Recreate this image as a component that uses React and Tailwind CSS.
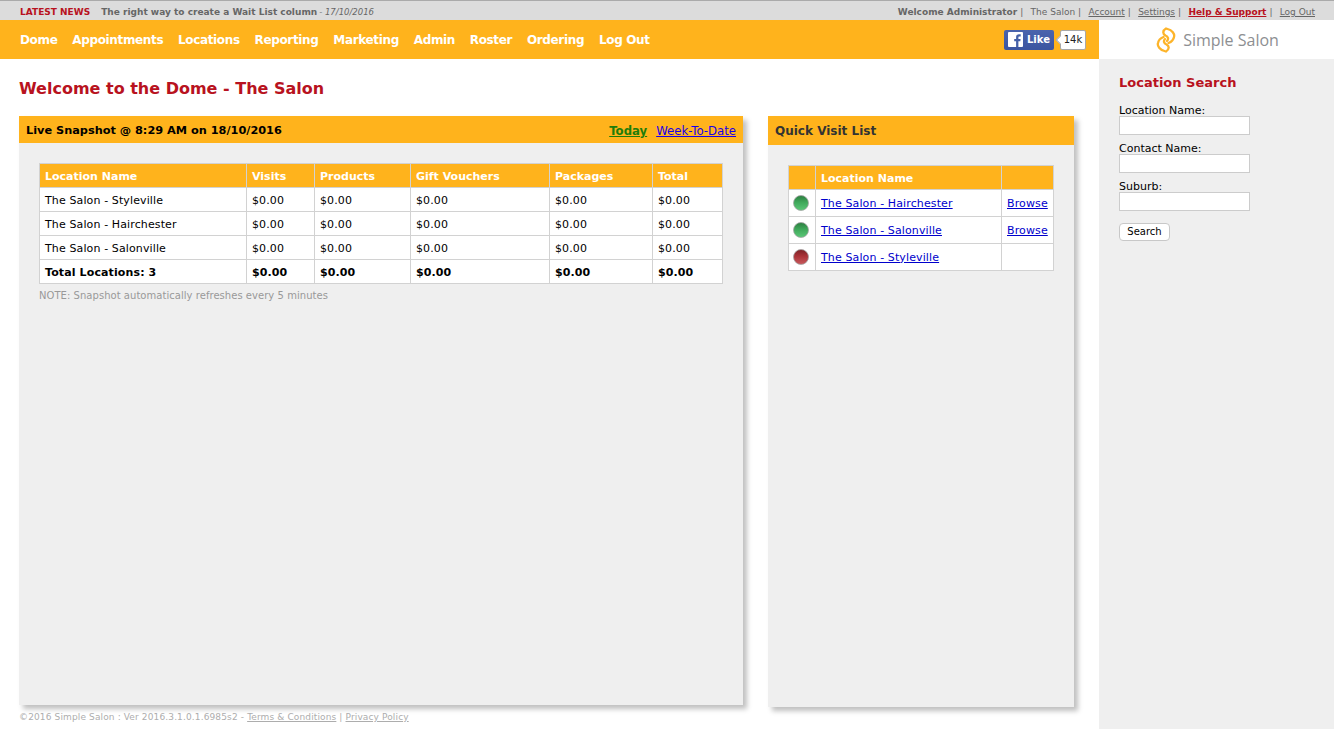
const FONT = "font-['DejaVu_Sans',Verdana,sans-serif]";

function Ball({ color }) {
  const id = color === "green" ? "ballG" : "ballR";
  const stops = color === "green" ? ["#2c7d40", "#3fa85a", "#5cc878"] : ["#7a2226", "#ab3338", "#c85a5e"];
  return (
    <svg width="16" height="16" viewBox="0 0 16 16" className="block">
      <defs>
        <linearGradient id={id} x1="0" y1="0" x2="0" y2="1">
          <stop offset="0" stopColor={stops[0]} />
          <stop offset="0.45" stopColor={stops[1]} />
          <stop offset="1" stopColor={stops[2]} />
        </linearGradient>
      </defs>
      <circle cx="8" cy="8" r="7.5" fill={`url(#${id})`} stroke="#a6a6a6" strokeWidth="0.8" />
    </svg>
  );
}

function Logo() {
  const half = "M10 1.5 C 6.5 3.5, 6.5 7, 9.5 8.5 C 12 9.5, 13 12, 11 14 M11.5 2 C 16 3, 19 7, 18 10 C 17.5 13, 15 15, 12.500 16";
  return (
    <svg width="20" height="26" viewBox="0 0 20 26" fill="none" stroke="#fdb42a" strokeWidth="2.3" strokeLinecap="round">
      <path d={half} />
      <path d={half} transform="rotate(180 10 13)" />
    </svg>
  );
}

const snapshotRows = ["The Salon - Styleville", "The Salon - Hairchester", "The Salon - Salonville"];
const cols = [
  ["w-[207px]", "Location Name"],
  ["w-[68px]", "Visits"],
  ["w-[96px]", "Products"],
  ["w-[139px]", "Gift Vouchers"],
  ["w-[103px]", "Packages"],
  ["w-[70px]", "Total"],
];
const cell = "h-[24px] border border-[#d2d2d2] pl-[5px] pr-[5px] pt-[4px] pb-0 text-left align-middle";
const thCell = "border border-[#d2d2d2] pl-[5px] pr-[5px] pt-[4px] pb-0 text-left align-middle text-white font-bold";
const quickCell = "border border-[#d2d2d2] pl-[5px] pr-[5px] pt-[2px] pb-0 align-middle tracking-[0.12px]";
const nav = ["Dome", "Appointments", "Locations", "Reporting", "Marketing", "Admin", "Roster", "Ordering", "Log Out"];

function Field({ label }) {
  return (
    <div className="mb-[6px]">
      <label className="block h-[13px] text-[11px] leading-[15px] text-black">{label}</label>
      <input type="text" className="block h-[19px] w-[131px] border border-[#cccccc] bg-white" />
    </div>
  );
}

function Sep() {
  return <span className="ml-[3px] mr-[7.3px]">|</span>;
}

export default function App() {
  return (
    <div className={`${FONT} flex h-[729px] w-[1334px] flex-col overflow-hidden bg-white text-[11px] text-black`}>
      <div className="flex h-[20px] shrink-0 items-center justify-between border-t border-[#aaaaaa] bg-[#dcdcdc] pl-[20px] pr-[19px] pt-[4px] text-[9px] text-[#666666]">
        <div className="flex items-center">
          <span className="text-[9px] font-bold text-[#b81220]">LATEST NEWS</span>
          <span className="ml-[11px] font-bold tracking-[0.01px]">The right way to create a Wait List column</span>
          <span className="ml-[2px] italic text-[8.5px]">- 17/10/2016</span>
        </div>
        <div className="flex items-center whitespace-pre">
          <span className="font-bold">Welcome Administrator</span>
          <Sep />
          <span>The Salon</span>
          <Sep />
          <a className="underline">Account</a>
          <Sep />
          <a className="underline">Settings</a>
          <Sep />
          <a className="font-bold text-[#b81220] underline">Help &amp; Support</a>
          <Sep />
          <a className="underline">Log Out</a>
        </div>
      </div>

      <div className="flex h-[39px] shrink-0">
        <div className="flex w-[1099px] items-center justify-between bg-[#ffb31c] pl-[20px] pr-[13px]">
          <nav className="flex gap-[14.8px] text-[12px] font-bold tracking-[-0.35px] text-white">
            {nav.map((n) => (
              <span key={n}>{n}</span>
            ))}
          </nav>
          <div className="flex items-center">
            <div className="flex h-[20px] w-[50px] items-center rounded-[2px] bg-gradient-to-b from-[#4a64ad] to-[#3b55a0] pl-[4px] text-[10px] font-bold text-white">
              <svg width="15" height="15" viewBox="0 0 15 15" className="shrink-0">
                <rect width="15" height="15" rx="1" fill="#fff" />
                <path d="M10.4 15V9.2h1.9l.3-2.3h-2.2V5.5c0-.7.2-1.100 1.100-1.100h1.200V2.300c-.2 0-.9-.1-1.700-.1-1.700 0-2.900 1-2.900 3v1.700H6.200v2.300h1.900V15z" fill="#4460a8" />
              </svg>
              <span className="ml-[4px]">Like</span>
            </div>
            <div className="relative ml-[6px] flex h-[20px] w-[26px] items-center justify-center rounded-[2px] border border-[#a8a8a8] bg-white text-[10px] text-[#222222]">
              <span className="absolute left-[-4px] top-[6px] h-[6px] w-[6px] rotate-45 border-b border-l border-[#a8a8a8] bg-white" />
              <span className="relative">14k</span>
            </div>
          </div>
        </div>
        <div className="flex flex-1 items-center justify-center gap-[7px] bg-white pl-[2px]">
          <Logo />
          <span className="font-['Open_Sans',sans-serif] text-[16px] font-medium text-[#8d8f92]">Simple Salon</span>
        </div>
      </div>

      <div className="flex min-h-0 flex-1">
        <main className="flex w-[1099px] shrink-0 flex-col pl-[19px]">
          <h1 className="mt-[20px] h-[18px] text-[16px] font-bold leading-[19px] text-[#b81220]">Welcome to the Dome - The Salon</h1>

          <div className="mt-[19px] flex items-start gap-[25px]">
            <section className="h-[589px] w-[724px] bg-[#efefef] shadow-[4px_4px_5px_rgba(0,0,0,0.25)]">
              <div className="flex h-[27px] items-center justify-between bg-[#ffb31c] pl-[7px] pr-[7px] pt-[4px]">
                <span className="font-bold text-[11.3px] text-black">Live Snapshot @ 8:29 AM on 18/10/2016</span>
                <span className="flex gap-[9px] text-[11.7px]">
                  <a className="font-bold text-[#1e7d0a] underline">Today</a>
                  <a className="text-[#1a00e8] underline">Week-To-Date</a>
                </span>
              </div>
              <div className="pl-[20px] pt-[20px]">
                <table className="w-[684px] table-fixed border-collapse bg-white">
                  <colgroup>
                    {cols.map(([w, name]) => (
                      <col key={name} className={w} />
                    ))}
                  </colgroup>
                  <thead>
                    <tr className="h-[24px] bg-[#ffb31c]">
                      {cols.map(([, name]) => (
                        <th key={name} className={thCell}>{name}</th>
                      ))}
                    </tr>
                  </thead>
                  <tbody className="tracking-[0.12px]">
                    {snapshotRows.map((r) => (
                      <tr key={r}>
                        <td className={cell}>{r}</td>
                        {[0, 1, 2, 3, 4].map((i) => (
                          <td key={i} className={cell}>$0.00</td>
                        ))}
                      </tr>
                    ))}
                    <tr className="font-bold">
                      <td className={cell}>Total Locations: 3</td>
                      {[0, 1, 2, 3, 4].map((i) => (
                        <td key={i} className={cell}>$0.00</td>
                      ))}
                    </tr>
                  </tbody>
                </table>
                <p className="mt-[5px] text-[10px] leading-[13px] tracking-[0.04px] text-[#999999]">NOTE: Snapshot automatically refreshes every 5 minutes</p>
              </div>
            </section>

            <section className="h-[591px] w-[306px] bg-[#efefef] shadow-[4px_4px_5px_rgba(0,0,0,0.25)]">
              <div className="flex h-[29px] items-center bg-[#ffb31c] pl-[7px] text-[12px] font-bold text-[#333333]">Quick Visit List</div>
              <div className="pl-[20px] pt-[20px]">
                <table className="w-[265px] table-fixed border-collapse bg-white">
                  <colgroup>
                    <col className="w-[27px]" />
                    <col className="w-[186px]" />
                    <col className="w-[52px]" />
                  </colgroup>
                  <thead>
                    <tr className="h-[24px] bg-[#ffb31c]">
                      <th className={thCell}></th>
                      <th className={thCell}>Location Name</th>
                      <th className={thCell}></th>
                    </tr>
                  </thead>
                  <tbody>
                    {[["green", "The Salon - Hairchester", true], ["green", "The Salon - Salonville", true], ["red", "The Salon - Styleville", false]].map(([c, n, b]) => (
                      <tr key={n} className="h-[27px]">
                        <td className="border border-[#d2d2d2] p-0 pl-[4px] align-middle"><Ball color={c} /></td>
                        <td className={quickCell}><a className="text-[#0000cc] underline">{n}</a></td>
                        <td className={quickCell}>{b && <a className="text-[#0000cc] underline">Browse</a>}</td>
                      </tr>
                    ))}
                  </tbody>
                </table>
              </div>
            </section>
          </div>

          <div className="mt-[4px] text-[9px] leading-[13px] tracking-[0.13px] text-[#adadad]">
            ©2016 Simple Salon : Ver 2016.3.1.0.1.6985s2 - <a className="underline">Terms &amp; Conditions</a> | <a className="underline">Privacy Policy</a>
          </div>
        </main>

        <aside className="flex-1 bg-[#efefef] pl-[20px] pt-[16px]">
          <h2 className="h-[16px] text-[13px] font-bold leading-[16px] text-[#b81220]">Location Search</h2>
          <div className="mt-[12px]">
            <Field label="Location Name:" />
            <Field label="Contact Name:" />
            <Field label="Suburb:" />
          </div>
          <button className="mt-[6px] h-[18px] w-[51px] rounded-[4px] border border-[#c8c8c8] bg-white text-[10px] leading-none text-black">Search</button>
        </aside>
      </div>
    </div>
  );
}
